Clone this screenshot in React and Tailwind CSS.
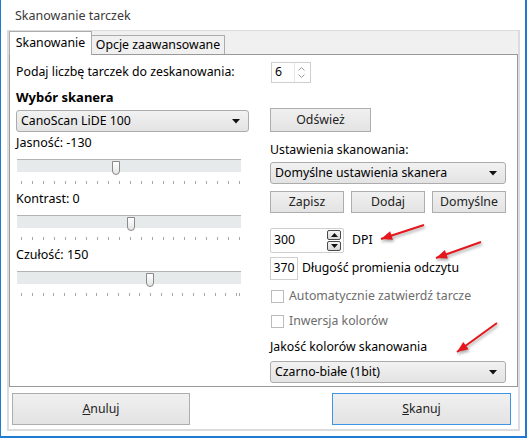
import React from 'react';

const FONT = { fontFamily: '"Noto Sans", "Open Sans", sans-serif' };

// red annotation arrows drawn over the dialog
const ARROWS = [
  [424, 225, 381, 239],
  [481, 242, 436, 258],
  [497, 323, 457, 352],
];

function arrowHead(x1, y1, x2, y2) {
  const len = Math.hypot(x2 - x1, y2 - y1);
  const dx = (x2 - x1) / len;
  const dy = (y2 - y1) / len;
  const bx = x2 - dx * 11;
  const by = y2 - dy * 11;
  const nx = -dy * 4.5;
  const ny = dx * 4.5;
  return `${x2},${y2} ${bx + nx},${by + ny} ${bx - nx},${by - ny}`;
}

function Triangle() {
  return (
    <svg width="8" height="5" viewBox="0 0 8 5" className="shrink-0">
      <path d="M0 0 L8 0 L4 4.5 Z" fill="#111" />
    </svg>
  );
}

function Combo({ label, className = '' }) {
  return (
    <div
      className={`flex items-center justify-between h-[22px] px-[4px] pr-[8px] rounded-[3px] border border-[#acacac] bg-gradient-to-b from-[#f2f2f2] to-[#e3e3e3] text-[12.3px] text-black ${className}`}
    >
      <span>{label}</span>
      <Triangle />
    </div>
  );
}

function Btn({ children, className = '' }) {
  return (
    <div
      className={`flex items-center justify-center border border-[#adadad] bg-gradient-to-b from-[#f0f0f0] to-[#e3e3e3] text-[12.3px] text-[#222] ${className}`}
    >
      {children}
    </div>
  );
}

function Slider({ label, pos, doubleEnd }) {
  const ticks = Array.from({ length: 21 }, (_, i) => i);
  return (
    <div className="flex flex-col">
      <div className="h-[16px] leading-[16px] text-[12.5px] text-black">{label}</div>
      <div className="relative mt-[8px] ml-[1px] w-[224px] h-[13px] bg-[#e7eaea] border-t border-[#b4b4b4]">
        <div
          className="absolute top-[1px] w-[8px] h-[14px] rounded-b-[4px] border border-[#8a8a8a] bg-gradient-to-b from-white to-[#e4e4e4]"
          style={{ left: pos }}
        />
      </div>
      <div className="mt-[9px] ml-[5px] w-[219px] h-[3px] flex justify-between">
        {ticks.map((i) => (
          <div key={i} className="flex gap-[2px]">
            <div className="w-px h-[3px] bg-[#a8a8a8]" />
            {doubleEnd && i === 20 && <div className="w-px h-[3px] bg-[#a8a8a8]" />}
          </div>
        ))}
      </div>
    </div>
  );
}

function Check({ label }) {
  return (
    <div className="flex items-center h-[16px] gap-[5px]">
      <div className="w-[13px] h-[13px] border border-[#bcbcbc] bg-white ml-[1px]" />
      <span className="text-[12.3px] text-[#6d6d6d]">{label}</span>
    </div>
  );
}

export default function App() {
  return (
    <div
      className="relative w-[527px] h-[438px] bg-white border-l border-r-2 border-b-2 border-[#1e7ad2] flex flex-col"
      style={FONT}
    >
      {/* title bar */}
      <div className="h-[30px] flex items-center pl-[14px] pt-[2px] text-[12.5px] text-[#3a3a3a]">
        Skanowanie tarczek
      </div>

      {/* dialog frame */}
      <div className="ml-[6px] mr-[5px] flex flex-col border-x-2 border-b-2 border-t border-[#dcdcdc]">
        {/* tab strip */}
        <div className="h-[23px] bg-[#f0f0f0] flex items-end">
          <div className="relative z-10 -mb-px h-[24px] w-[83px] flex items-center justify-center bg-white border-x border-t border-[#acacac] text-[12.3px] text-black">
            Skanowanie
          </div>
          <div className="h-[19px] w-[133px] flex items-center justify-center bg-[#f0f0f0] border-x border-t border-[#acacac] border-l-0 text-[12.3px] text-black">
            Opcje zaawansowane
          </div>
        </div>

        {/* tab page */}
        <div className="h-[333px] bg-white border border-[#999] pl-[6px] pt-[7px]">
          <div className="flex h-[21px]">
            <div className="w-[254px] flex items-center text-[12.3px] text-black">
              Podaj liczbę tarczek do zeskanowania:
            </div>
            <div className="ml-px w-[40px] h-[21px] flex items-center justify-between border border-[#cfcfcf] pl-[3px] pr-[2px]">
              <span className="text-[12.3px] text-black">6</span>
              <div className="flex flex-col items-center justify-center gap-[3px] w-[14px] h-[19px] border-l border-[#e6e6e6]">
                <svg width="7" height="4" viewBox="0 0 7 4">
                  <path d="M0.5 3.5 L3.5 0.5 L6.5 3.5" stroke="#9a9a9a" fill="none" />
                </svg>
                <svg width="7" height="4" viewBox="0 0 7 4">
                  <path d="M0.5 0.5 L3.5 3.5 L6.5 0.5" stroke="#9a9a9a" fill="none" />
                </svg>
              </div>
            </div>
          </div>

          <div className="flex gap-[21px]">
            {/* left column */}
            <div className="w-[233px] flex flex-col">
              <div className="mt-[5px] h-[18px] leading-[18px] text-[13px] font-bold text-black">
                Wybór skanera
              </div>
              <Combo label="CanoScan LiDE 100" className="mt-[4px] w-[233px]" />
              <div className="mt-[3px]">
                <Slider label="Jasność: -130" pos={95} />
              </div>
              <div className="mt-[7px]">
                <Slider label="Kontrast: 0" pos={110} />
              </div>
              <div className="mt-[7px]">
                <Slider label="Czułość: 150" pos={129} doubleEnd />
              </div>
            </div>

            {/* right column */}
            <div className="w-[236px] flex flex-col">
              <Btn className="mt-[25px] w-[101px] h-[24px]">Odśwież</Btn>
              <div className="mt-[10px] h-[16px] leading-[16px] text-[12.3px] text-black">
                Ustawienia skanowania:
              </div>
              <Combo label="Domyślne ustawienia skanera" className="mt-[4px] w-[236px]" />
              <div className="mt-[7px] flex gap-[7px]">
                <Btn className="w-[74px] h-[22px]">Zapisz</Btn>
                <Btn className="w-[74px] h-[22px]">Dodaj</Btn>
                <Btn className="w-[74px] h-[22px]">Domyślne</Btn>
              </div>

              <div className="mt-[15px] flex items-center gap-[8px]">
                <div className="w-[74px] h-[25px] flex items-center justify-between rounded-[2px] border border-[#cfcfcf] pl-[3px] pr-[2px]">
                  <span className="text-[12.3px] text-black">300</span>
                  <div className="flex flex-col gap-px">
                    {[0, 1].map((i) => (
                      <div
                        key={i}
                        className="w-[14px] h-[10px] flex items-center justify-center rounded-[2px] border border-[#4a4a4a] bg-gradient-to-b from-[#f4f4f4] to-[#d8d8d8]"
                      >
                        <svg width="7" height="4" viewBox="0 0 7 4">
                          <path d={i === 0 ? 'M0 4 L3.5 0 L7 4 Z' : 'M0 0 L3.5 4 L7 0 Z'} fill="#111" />
                        </svg>
                      </div>
                    ))}
                  </div>
                </div>
                <span className="text-[12.3px] text-black">DPI</span>
              </div>

              <div className="mt-[4px] flex items-center gap-[4px]">
                <div className="w-[28px] h-[23px] flex items-center justify-center border border-[#cfcfcf] text-[12.3px] text-black">
                  370
                </div>
                <span className="text-[12.3px] text-black">Długość promienia odczytu</span>
              </div>

              <div className="mt-[8px]">
                <Check label="Automatycznie zatwierdź tarcze" />
              </div>
              <div className="mt-[9px]">
                <Check label="Inwersja kolorów" />
              </div>

              <div className="mt-[10px] h-[16px] leading-[16px] text-[12.3px] text-black">
                Jakość kolorów skanowania
              </div>
              <Combo label="Czarno-białe (1bit)" className="mt-[6px] w-[236px]" />
            </div>
          </div>
        </div>

        {/* footer buttons */}
        <div className="h-[42px] flex items-start justify-between pt-[6px] pl-[3px] pr-[7px]">
          <Btn className="w-[178px] h-[32px]">
            <span>
              <span className="underline">A</span>nuluj
            </span>
          </Btn>
          <Btn className="w-[179px] h-[32px] !border-[#3c96e6]">
            <span>
              <span className="underline">S</span>kanuj
            </span>
          </Btn>
        </div>
      </div>

      {/* annotations */}
      <svg
        className="absolute left-[-1px] top-0 pointer-events-none"
        width="527"
        height="438"
        style={{ filter: 'drop-shadow(1px 2px 1.5px rgba(0,0,0,0.35))' }}
      >
        {ARROWS.map(([x1, y1, x2, y2], i) => (
          <g key={i}>
            <line x1={x1} y1={y1} x2={x2} y2={y2} stroke="#e5171c" strokeWidth="2" />
            <polygon points={arrowHead(x1, y1, x2, y2)} fill="#e5171c" />
          </g>
        ))}
      </svg>
    </div>
  );
}
